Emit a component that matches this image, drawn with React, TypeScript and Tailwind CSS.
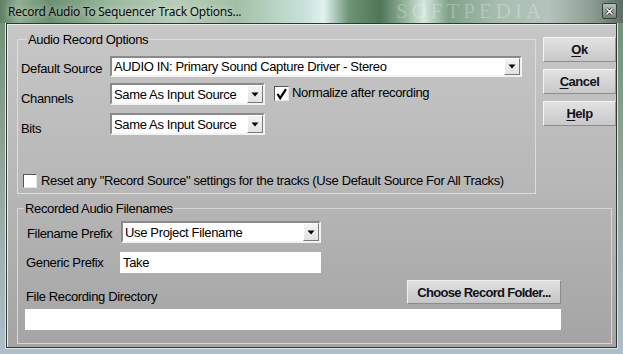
import React from "react";

const Arrow = () => (
  <div className="flex h-full w-[16px] shrink-0 items-center justify-center border border-t-[#ffffff] border-l-[#ffffff] border-b-[#7a7a7a] border-r-[#7a7a7a] bg-[linear-gradient(180deg,#f4f4f4,#e2e2e2)]">
    <svg width="8" height="5" viewBox="0 0 8 5">
      <path d="M0.5 0.5 H7.5 L4 4.5 Z" fill="#000" />
    </svg>
  </div>
);

const Combo = ({ text, className }: { text: string; className: string }) => (
  <div
    className={`flex border-2 border-t-[#8a8a8a] border-l-[#8a8a8a] border-b-[#f2f2f2] border-r-[#f2f2f2] bg-white ${className}`}
  >
    <div className="flex flex-1 items-center pl-[2px] text-[13px] leading-[15px] tracking-[-0.35px] text-black whitespace-nowrap overflow-hidden">
      {text}
    </div>
    <Arrow />
  </div>
);

const Check = ({ checked, className }: { checked?: boolean; className: string }) => (
  <div
    className={`flex items-center justify-center border border-t-[#555] border-l-[#555] border-b-[#e8e8e8] border-r-[#e8e8e8] bg-white ${className}`}
  >
    {checked && (
      <svg width="13" height="12" viewBox="0 0 13 12">
        <path d="M2.5 6 L5.2 10.2 L11 1.2" fill="none" stroke="#000" strokeWidth="2.2" />
      </svg>
    )}
  </div>
);

const SideButton = ({ u, rest }: { u: string; rest: string }) => (
  <div className="flex h-[25px] w-[73px] items-center justify-center border border-t-[#f4f4f4] border-l-[#f4f4f4] border-b-[#8c8c8c] border-r-[#9a9a9a] bg-[linear-gradient(180deg,#e2e2e2,#c8c8c8)] text-[13px] font-bold leading-[15px] tracking-[-0.5px] text-[#10121c]">
    <span>
      <span className="underline underline-offset-[2px]">{u}</span>
      {rest}
    </span>
  </div>
);

const L = "text-[13px] leading-[15px] tracking-[-0.35px]";

export default function App() {
  return (
    <div className="relative flex h-[354px] w-[623px] flex-col overflow-hidden bg-[linear-gradient(180deg,#6e8f74_0%,#8ea59a_45%,#aebfc8_100%)] font-['Liberation_Sans',Arial,sans-serif]">
      {/* Title bar */}
      <div className="relative flex h-[23px] shrink-0 items-center justify-between bg-[linear-gradient(90deg,#5d7f63_0%,#8fae93_3%,#6b8f70_8%,#9cb99f_18%,#b7cdb8_28%,#a3bfa6_38%,#c9e2dc_49%,#e0f2ee_52%,#6d9475_56%,#4e7656_61%,#93b39a_65%,#d6e8e0_68%,#7ea287_72%,#a8bdb1_80%,#b4c4bc_88%,#8c9e94_95%,#5d6d64_100%)] pl-[8px] pr-[6px]">
        <span className="font-['Noto_Sans',sans-serif] text-[12px] leading-[16px] tracking-[-0.27px] text-[#0c0c0c] [text-shadow:0_0_6px_rgba(255,255,255,0.7)]">
          Record Audio To Sequencer Track Options...
        </span>
        <div className="pointer-events-none absolute left-[396px] top-0 font-['Liberation_Serif',serif] text-[21px] leading-[23px] tracking-[4px] text-white/25">
          SOFTPEDIA
        </div>
        <div className="relative mt-[-1px] flex h-[16px] w-[15px] items-center justify-center rounded-[2px] border border-[#34423c] bg-[linear-gradient(180deg,#b6c2bc,#6f7f77)]">
          <svg width="9" height="9" viewBox="0 0 9 9">
            <path d="M1.5 1.5 L7.5 7.5 M7.5 1.5 L1.5 7.5" stroke="#2a2a2a" strokeWidth="3" />
            <path d="M1.5 1.5 L7.5 7.5 M7.5 1.5 L1.5 7.5" stroke="#ffffff" strokeWidth="1.6" />
          </svg>
        </div>
      </div>

      {/* Client area */}
      <div className="flex flex-1 flex-col px-[6px] pb-[6px]">
        <div className="flex flex-1 flex-col border border-[#2d3834] bg-[linear-gradient(180deg,#c7c7c7_0%,#b9b9b9_45%,#a4a4a4_100%)] pl-[10px] pt-[8px] text-black shadow-[inset_1px_1px_0_#ececec,0_0_0_1px_#dbe6ea]">
          {/* Top row */}
          <div className="flex gap-[7px]">
            <fieldset className="h-[162px] w-[519px] border border-[#dcdcdc] pl-[3px]">
              <legend className={`ml-[6px] px-[1px] ${L}`}>Audio Record Options</legend>
              <div className="mt-[9px] flex items-start">
                <div className={`w-[89px] pt-[5px] ${L}`}>Default Source</div>
                <Combo text="AUDIO IN: Primary Sound Capture Driver - Stereo" className="h-[21px] w-[412px]" />
              </div>
              <div className="mt-[6px] flex items-start">
                <div className={`w-[89px] pt-[8px] ${L}`}>Channels</div>
                <Combo text="Same As Input Source" className="h-[22px] w-[155px]" />
                <Check checked className="ml-[9px] mt-[3px] h-[15px] w-[15px]" />
                <span className={`ml-[3px] mt-[2px] ${L}`}>Normalize after recording</span>
              </div>
              <div className="mt-[7px] flex items-start">
                <div className={`w-[89px] pt-[8px] ${L}`}>Bits</div>
                <Combo text="Same As Input Source" className="h-[22px] w-[155px]" />
              </div>
              <div className="mt-[37px] flex items-center">
                <Check className="ml-[2px] h-[14px] w-[14px]" />
                <span className={`ml-[4px] ${L}`}>
                  Reset any "Record Source" settings for the tracks (Use Default Source For All Tracks)
                </span>
              </div>
            </fieldset>
            <div className="mt-[5px] flex flex-col gap-[7px]">
              <SideButton u="O" rest="k" />
              <SideButton u="C" rest="ancel" />
              <SideButton u="H" rest="elp" />
            </div>
          </div>

          {/* Group 2 */}
          <fieldset className="mt-[7px] h-[143px] w-[595px] border border-[#d6d6d6]">
            <legend className={`ml-[6px] px-[1px] ${L}`}>Recorded Audio Filenames</legend>
            <div className="mt-[5px] flex items-start pl-[9px]">
              <div className={`w-[94px] pt-[5px] ${L}`}>Filename Prefix</div>
              <Combo text="Use Project Filename" className="h-[22px] w-[200px]" />
            </div>
            <div className="mt-[9px] flex items-start pl-[8px]">
              <div className={`w-[94px] pt-[3px] ${L}`}>Generic Prefix</div>
              <div className={`flex h-[21px] w-[201px] items-center bg-white pl-[3px] ${L}`}>Take</div>
            </div>
            <div className="mt-[7px] flex w-[543px] items-start justify-between pl-[7px]">
              <div className={`pt-[9px] pl-[1px] ${L}`}>File Recording Directory</div>
              <div className="flex h-[24px] w-[154px] items-center justify-center border border-t-[#f0f0f0] border-l-[#f0f0f0] border-b-[#8c8c8c] border-r-[#8c8c8c] bg-[linear-gradient(180deg,#e0e0e0,#c6c6c6)] text-[13px] font-bold leading-[15px] tracking-[-0.7px] text-[#10121c]">
                Choose Record Folder...
              </div>
            </div>
            <div className="mt-[5px] pl-[7px]">
              <div className="h-[21px] w-[536px] bg-white" />
            </div>
          </fieldset>
        </div>
      </div>
    </div>
  );
}
